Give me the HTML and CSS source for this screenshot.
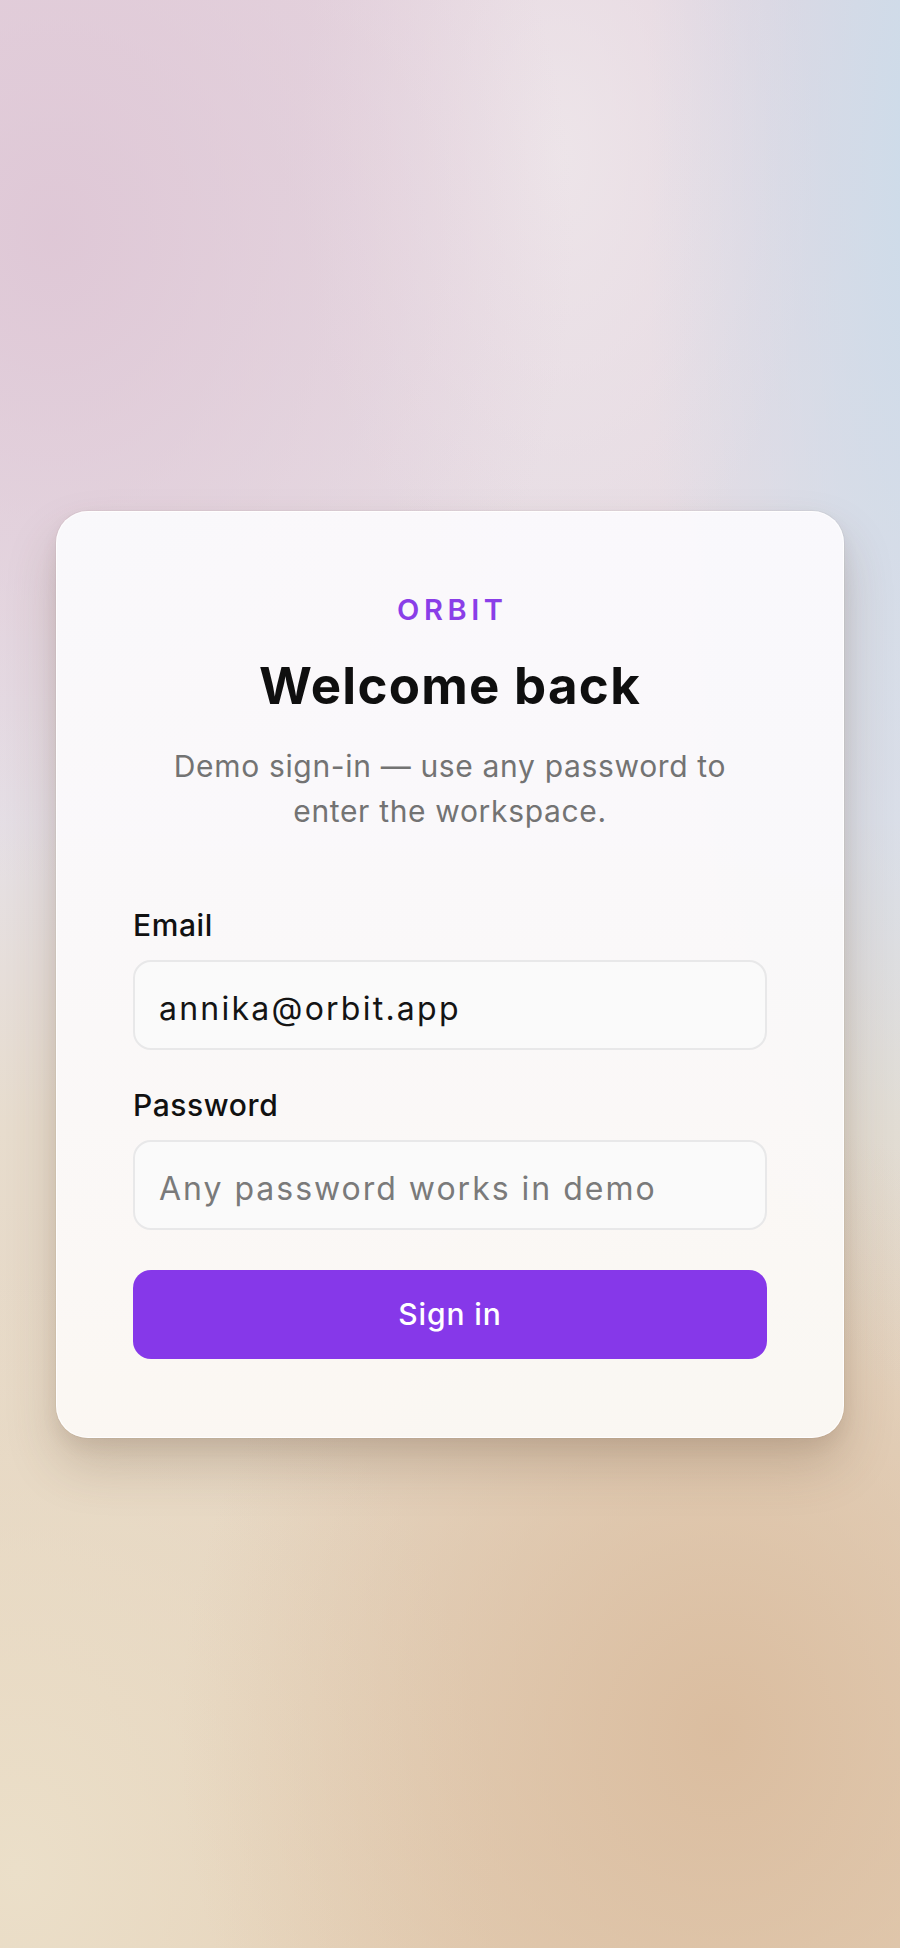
FILE: index.html
```html
<!DOCTYPE html>
<html lang="en">
<head>
<meta charset="utf-8">
<meta name="viewport" content="width=device-width, initial-scale=1">
<title>Orbit — Sign in</title>
<link rel="stylesheet" href="styles.css">
</head>
<body>
<main class="page">
  <form class="card" onsubmit="return false;">
    <div class="brand">ORBIT</div>
    <h1 class="title">Welcome back</h1>
    <p class="subtitle">Demo sign-in — use any password to enter the workspace.</p>
    <label class="field-label" for="email">Email</label>
    <input class="field-input" id="email" type="email" value="annika@orbit.app">
    <label class="field-label field-label--second" for="password">Password</label>
    <input class="field-input" id="password" type="password" placeholder="Any password works in demo">
    <button class="submit" type="submit">Sign in</button>
  </form>
</main>
</body>
</html>
```
FILE: styles.css
```css
* { box-sizing: border-box; }

html, body {
  margin: 0;
  padding: 0;
}

body {
  min-height: 1948px;
  font-family: Inter, "Noto Sans", "Liberation Sans", sans-serif;
  color: #111111;
  background-color: #e6dccf;
  background-image:
    radial-gradient(ellipse 520px 650px at 6% 12%, rgba(222, 198, 213, 0.9) 0%, rgba(222, 198, 213, 0) 100%),
    radial-gradient(ellipse 280px 1250px at 103% 8%, rgba(204, 220, 234, 1) 0%, rgba(204, 220, 234, 0) 100%),
    radial-gradient(ellipse 260px 460px at 62% 8%, rgba(238, 230, 234, 0.9) 0%, rgba(238, 230, 234, 0) 100%),
    radial-gradient(ellipse 540px 620px at 80% 89%, rgba(218, 188, 158, 0.95) 0%, rgba(218, 188, 158, 0) 100%),
    radial-gradient(ellipse 480px 620px at 2% 96%, rgba(235, 223, 201, 1) 0%, rgba(235, 223, 201, 0) 100%),
    linear-gradient(180deg, #e5d5df 0%, #e7dde4 28%, #e5e0e6 42%, #e7dccd 58%, #e4cfb6 100%);
}

.page {
  min-height: 1948px;
  display: flex;
  align-items: center;
  justify-content: center;
  padding: 0 56px;
}

.card {
  width: 100%;
  display: flex;
  flex-direction: column;
  padding: 80px 76px 78px;
  border-radius: 32px;
  border: 1px solid rgba(255, 255, 255, 0.85);
  background: linear-gradient(180deg, rgba(250, 249, 252, 0.97) 0%, rgba(250, 249, 250, 0.97) 45%, rgba(251, 248, 244, 0.97) 100%);
  box-shadow:
    0 0 0 1px rgba(120, 100, 90, 0.06),
    0 28px 50px rgba(95, 70, 45, 0.22),
    0 8px 16px rgba(95, 70, 45, 0.08);
}

.brand {
  text-align: center;
  font-size: 29px;
  line-height: 36px;
  font-weight: 600;
  letter-spacing: 0.16em;
  text-indent: 0.16em;
  color: #8a3ee8;
}

.title {
  margin: 29px 0 0;
  text-align: center;
  font-size: 51px;
  line-height: 58px;
  font-weight: 700;
  letter-spacing: 0.025em;
  color: #0f0f0f;
}

.subtitle {
  margin: 29px auto 0;
  max-width: 600px;
  text-align: center;
  font-size: 30px;
  line-height: 45px;
  font-weight: 400;
  letter-spacing: 0.022em;
  color: #737373;
}

.field-label {
  margin-top: 73px;
  font-size: 30px;
  line-height: 36px;
  font-weight: 500;
  letter-spacing: 0.02em;
  color: #111111;
}

.field-label--second {
  margin-top: 37px;
}

.field-input {
  margin-top: 17px;
  width: 100%;
  height: 90px;
  padding: 8px 24px 0;
  border: 2px solid #e8e8e9;
  border-radius: 18px;
  background: #fafafa;
  font-family: inherit;
  font-size: 32px;
  letter-spacing: 0.07em;
  color: #141414;
  outline: none;
}

.field-input::placeholder {
  color: #7a7a7a;
  letter-spacing: 0.062em;
  opacity: 1;
}

.submit {
  margin-top: 40px;
  height: 89px;
  border: 0;
  border-radius: 18px;
  background: #8638e9;
  color: #ffffff;
  font-family: inherit;
  font-size: 30px;
  font-weight: 500;
  letter-spacing: 0.03em;
  cursor: pointer;
}
```
